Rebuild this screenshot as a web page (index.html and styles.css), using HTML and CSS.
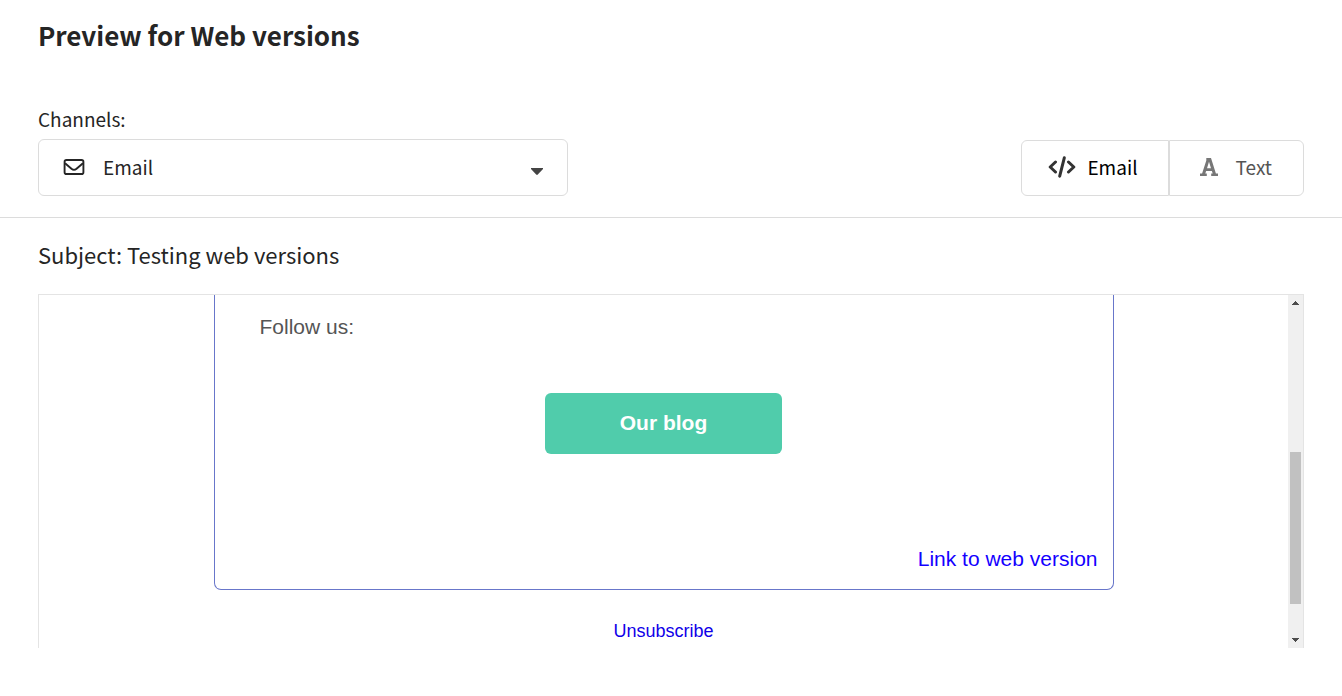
FILE: index.html
```html
<!DOCTYPE html>
<html lang="en">
<head>
  <meta charset="UTF-8">
  <meta name="viewport" content="width=device-width, initial-scale=1.0">
  <title>Preview for Web versions</title>
  <link rel="stylesheet" href="styles.css">
</head>
<body>
  <header class="preview-header">
    <h1>Preview for Web versions</h1>
    <div class="toolbar">
      <div class="channels">
        <label for="channel">Channels:</label>
        <div class="select-box">
          <svg class="mail-icon" viewBox="0 0 22 17" aria-hidden="true">
            <rect x="1" y="1" width="20" height="15" rx="2"/>
            <path d="M1.5 4.5 L8.3 10.3 Q11 12.7 13.7 10.3 L20.5 4.5"/>
          </svg>
          <select id="channel">
            <option>Email</option>
            <option>SMS</option>
          </select>
          <svg class="caret-icon" viewBox="0 0 12 7" aria-hidden="true">
            <path d="M0 0H12V1L6.8 6.6Q6 7.2 5.2 6.6L0 1Z"/>
          </svg>
        </div>
      </div>

      <!-- Email / Text switch -->
      <div class="view-switch">
        <button type="button" class="view-button active">
          <svg class="code-icon" viewBox="0 0 28 22" aria-hidden="true">
            <path d="M7.5 6L2.2 11L7.5 16M20.5 6L25.8 11L20.5 16M16.3 1.8L11.7 20.2"/>
          </svg>
          Email
        </button>
        <button type="button" class="view-button">
          <svg class="font-icon" viewBox="0 0 18 18" aria-hidden="true">
            <path fill-rule="evenodd" d="M6.3 0H11L15.9 15.4H18V18H11.2V15.4H12.7L11.9 12.9H6.1L5.3 15.4H6.8V18H0V15.4H2.1L6.3 2.4ZM9 3.8L7 10.2H11Z"/>
          </svg>
          Text
        </button>
      </div>
    </div>
  </header>

  <main class="preview-body">
    <h2>Subject: Testing web versions</h2>
    <div class="message-frame">
      <div class="message">
        <div class="message-card">
          <p class="follow">Follow us:</p>
          <a class="blog-button" href="#">Our blog</a>
          <a class="web-link" href="#">Link to web version</a>
        </div>
        <a class="unsubscribe" href="#">Unsubscribe</a>
      </div>
      <!-- Scrollbar -->
      <div class="scrollbar">
        <svg class="arrow" viewBox="0 0 7 4" aria-hidden="true"><path d="M3 0H4V1H5V2H6V3H7V4H0V3H1V2H2V1H3Z"/></svg>
        <div class="track">
          <div class="thumb"></div>
        </div>
        <svg class="arrow" viewBox="0 0 7 4" aria-hidden="true"><path d="M0 0H7V1H6V2H5V3H4V4H3V3H2V2H1V1H0Z"/></svg>
      </div>
    </div>
  </main>
</body>
</html>
```
FILE: styles.css
```css
/* General Styles */
* {
  box-sizing: border-box;
}

body {
  margin: 0;
  height: 100vh;
  display: flex;
  flex-direction: column;
  font-family: "Noto Sans CJK SC", sans-serif;
  font-size: 19px;
  line-height: 28px;
  color: #252525;
  background-color: #fff;
}

h1 {
  margin: 0 0 52px;
  font-size: 26px;
  font-weight: 600;
  line-height: 36px;
}

/* Header */
.preview-header {
  padding: 17px 38px 21px;
  border-bottom: 1px solid #dcdcdc;
}

.toolbar {
  display: flex;
  justify-content: space-between;
  align-items: flex-end;
  gap: 24px;
}

.channels {
  flex: 0 1 530px;
}

.channels label {
  display: block;
  margin-bottom: 6px;
}

.select-box {
  position: relative;
}

.select-box select {
  display: block;
  width: 100%;
  height: 57px;
  padding: 0 48px 2px 64px;
  font: inherit;
  color: inherit;
  background-color: #fff;
  border: 1px solid #dcdcdc;
  border-radius: 6px;
  appearance: none;
}

.mail-icon {
  position: absolute;
  left: 25px;
  top: 20px;
  width: 22px;
  height: 16px;
  fill: none;
  stroke: #252525;
  stroke-width: 2;
  pointer-events: none;
}

.caret-icon {
  position: absolute;
  right: 25px;
  top: 29px;
  width: 12px;
  height: 7px;
  fill: #444;
  pointer-events: none;
}

/* View switch */
.view-switch {
  display: flex;
}

.view-button {
  display: flex;
  align-items: center;
  height: 56px;
  padding: 0 31px 2px 30px;
  gap: 18px;
  font: inherit;
  color: #555;
  background-color: #fff;
  border: 1px solid #dcdcdc;
  border-radius: 0 6px 6px 0;
}

.view-button.active {
  padding: 0 30px 2px 26px;
  gap: 11px;
  color: #000;
  border-radius: 6px 0 0 6px;
}

.code-icon {
  width: 28px;
  height: 22px;
  fill: none;
  stroke: #333;
  stroke-width: 3;
  stroke-linecap: round;
  stroke-linejoin: round;
}

.font-icon {
  width: 18px;
  height: 18px;
  fill: #777;
}

/* Message preview */
.preview-body {
  flex: 1;
  min-height: 0;
  display: flex;
  flex-direction: column;
  padding: 20px 38px 48px;
}

h2 {
  margin: 0 0 24px;
  font-size: 22px;
  font-weight: 400;
  line-height: 32px;
}

.message-frame {
  flex: 1;
  min-height: 0;
  display: flex;
  border: 1px solid #e4e4e4;
  border-bottom: 0;
}

.message {
  flex: 1;
  min-width: 0;
  overflow: hidden;
  display: flex;
  flex-direction: column;
  align-items: center;
  font-family: "Liberation Sans", Arial, sans-serif;
  font-size: 21px;
}

.message-card {
  width: 100%;
  max-width: 900px;
  display: flex;
  flex-direction: column;
  padding: 18px 15px 16px;
  border: 1px solid #6876ca;
  border-top: 0;
  border-radius: 0 0 7px 7px;
}

.message a {
  text-decoration: none;
}

.follow {
  margin: 0 0 52px 30px;
  color: #555;
}

.blog-button {
  align-self: center;
  min-width: 237px;
  padding: 16px 24px 17px;
  font-weight: bold;
  text-align: center;
  color: #fff;
  background-color: #50ccab;
  border-radius: 6px;
}

.web-link {
  align-self: flex-end;
  margin-top: 91px;
  color: #1400ff;
}

.unsubscribe {
  margin-top: 27px;
  font-size: 18px;
  color: #0f00e8;
}

/* Scrollbar */
.scrollbar {
  width: 15px;
  display: flex;
  flex-direction: column;
  align-items: center;
  padding: 6px 2px;
  background-color: #f0f0f0;
}

.arrow {
  width: 7px;
  height: 4px;
  fill: #4c4c4c;
  shape-rendering: crispEdges;
}

.track {
  flex: 1;
  align-self: stretch;
  display: flex;
  flex-direction: column;
  justify-content: flex-end;
  padding-bottom: 34px;
}

.thumb {
  height: 51%;
  background-color: #c1c1c1;
}
```
